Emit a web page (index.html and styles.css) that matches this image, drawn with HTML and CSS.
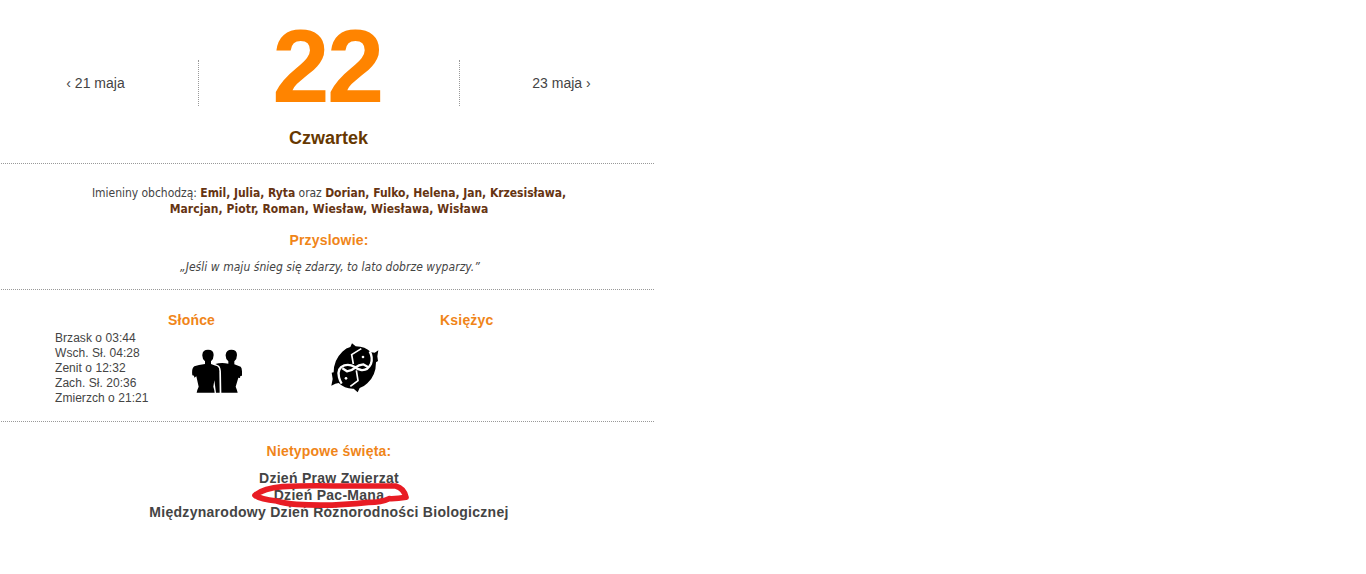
FILE: index.html
```html
<!DOCTYPE html>
<html lang="pl">
<head>
    <meta charset="UTF-8">
    <meta name="viewport" content="width=device-width, initial-scale=1.0">
    <title>Kalendarz - 22 maja</title>
    <link rel="stylesheet" href="styles.css">
</head>
<body>
    <div class="calendar">
        <header class="day">
            <nav class="days">
                <a href="#" class="prev">‹ 21 maja</a>
                <div class="number">22</div>
                <a href="#" class="next">23 maja ›</a>
            </nav>
            <h1 class="weekday">Czwartek</h1>
        </header>

        <section class="names">
            <p class="nameday">
                <span class="line1">Imieniny obchodzą: <b>Emil, Julia, Ryta</b> oraz <b>Dorian, Fulko, Helena, Jan, Krzesisława,</b></span><br>
                <span class="line2"><b>Marcjan, Piotr, Roman, Wiesław, Wiesława, Wisława</b></span>
            </p>
            <h2 class="title">Przyslowie:</h2>
            <p class="proverb">„Jeśli w maju śnieg się zdarzy, to lato dobrze wyparzy.”</p>
        </section>

        <section class="sky">
            <ul class="hours">
                <li>Brzask o 03:44</li>
                <li>Wsch. Sł. 04:28</li>
                <li>Zenit o 12:32</li>
                <li>Zach. Sł. 20:36</li>
                <li>Zmierzch o 21:21</li>
            </ul>
            <div class="sun">
                <h2 class="title">Słońce</h2>
                <!-- bliźnięta -->
                <svg class="gemini" viewBox="36 42 150 132">
                    <path d="M75 87L75 79Q66 72 67 59Q68 44 84 44Q101 44 101 60Q101 72 93 79L93 87Q103 91 112 94Q119 98 118 112L119 173L108 173L103 136L100 155Q103 164 104 173L50 173Q52 163 56 155L49 124L43 128L42 122L37 121Q34 100 43 94Q55 90 75 87Z"/>
                    <path d="M106 87Q123 82 145 86L145 79Q136 72 137 59Q139 44 154 44Q171 44 171 60Q171 72 163 79L163 88L182 95Q187 99 186 122L181 123L180 129L175 128L167 155Q171 164 173 173L124 173L123 115Q123 98 117 92Z"/>
                </svg>
            </div>
            <div class="moon">
                <h2 class="title">Księżyc</h2>
                <!-- ryby -->
                <svg class="pisces" viewBox="33 24 144 150">
                    <path d="M96 25L107 34Q136 34 153 52L164 53L175 46L172 64L174 78L168 82Q168 122 142 145Q131 156 119 159L113 172L101 161Q74 162 56 144L46 146L34 152L38 132L35 113L41 112Q41 75 67 50Q79 38 91 36Z"/>
                    <g class="cut">
                        <path class="thin" d="M124 41L95 59L100 87M91 154L114 137L109 106"/>
                        <path d="M149 49Q159 67 153 86Q143 107 124 105Q111 103 103 95Q89 87 73 91Q50 99 57 127Q60 139 65 146"/>
                        <path d="M145 97L130 88Q116 89 106 98Q96 107 81 109L67 100"/>
                    </g>
                    <g class="eyes">
                        <circle cx="129" cy="66" r="4"/>
                        <circle cx="78" cy="130" r="4"/>
                    </g>
                </svg>
            </div>
        </section>

        <section class="holidays">
            <h2 class="title">Nietypowe święta:</h2>
            <ul>
                <li>Dzień Praw Zwierząt</li>
                <li class="marked">Dzień Pac-Mana
                    <svg class="marker" viewBox="0 0 540 120">
                        <path d="M45 61Q70 40 127 35Q200 31 285 33L467 33Q492 40 498 67Q470 72 447 71Q425 82 385 82Q270 95 170 88Q135 86 110 78Q60 73 45 61Z"/>
                    </svg>
                </li>
                <li>Międzynarodowy Dzień Różnorodności Biologicznej</li>
            </ul>
        </section>
    </div>
</body>
</html>
```
FILE: styles.css
```css
* {
    box-sizing: border-box;
}

body {
    margin: 0;
    background: #fff;
    color: #444;
    font-family: "Liberation Sans", Arial, sans-serif;
}

h1, h2, p, ul {
    margin: 0;
    padding: 0;
}

ul {
    list-style: none;
}

.calendar {
    width: 653px;
    margin-left: 1px;
}

.day,
.names,
.sky {
    border-bottom: 1px dotted #999;
}

/* dzień */
.day {
    height: 164px;
    padding-top: 10px;
    text-align: center;
}

.days {
    display: flex;
    align-items: flex-end;
    height: 96px;
}

.days a {
    height: 46px;
    line-height: 46px;
    color: #444;
    font-size: 14px;
    text-decoration: none;
}

.prev {
    width: 198px;
    padding-right: 8px;
    border-right: 1px dotted #999;
}

.next {
    width: 195px;
    padding-left: 9px;
    border-left: 1px dotted #999;
}

.number {
    width: 260px;
    height: 96px;
    padding-right: 4px;
    line-height: 114px;
    color: #ff8400;
    font-size: 103px;
    font-weight: bold;
    letter-spacing: -2.5px;
}

.weekday {
    margin-top: 21px;
    padding-left: 2px;
    line-height: 22px;
    color: #663800;
    font-size: 18px;
}

.title {
    line-height: 18px;
    color: #f08519;
    font-size: 14px;
    letter-spacing: 0.2px;
}

/* imieniny i przysłowie */
.names {
    height: 126px;
    padding: 21px 0 0 3px;
    font-family: "DejaVu Sans Condensed", Tahoma, sans-serif;
    font-size: 12px;
    line-height: 16px;
    text-align: center;
}

.names b {
    color: #663412;
}

.line1 {
    letter-spacing: -0.03px;
}

.line2 {
    letter-spacing: 0.06px;
}

.names .title {
    margin-top: 14px;
    font-family: "Liberation Sans", Arial, sans-serif;
}

.proverb {
    margin-top: 10px;
    padding-left: 2px;
    font-style: italic;
    letter-spacing: 0.04px;
}

/* słońce i księżyc */
.sky {
    display: flex;
    height: 132px;
    padding: 21px 0 0 54px;
}

.hours {
    width: 113px;
    padding-top: 20px;
    font-size: 12px;
    letter-spacing: 0.05px;
    line-height: 15px;
}

.sun {
    width: 163px;
}

.moon {
    width: 200px;
}

.sky svg {
    display: block;
}

.gemini {
    width: 50px;
    height: 44px;
    margin: 20px 0 0 24px;
}

.moon .title {
    padding-left: 109px;
}

.pisces {
    width: 48px;
    height: 50px;
    margin-top: 14px;
}

.cut {
    fill: none;
    stroke: #fff;
    stroke-width: 7;
}

.thin {
    stroke-width: 5;
}

.eyes {
    fill: #fff;
}

/* nietypowe święta */
.holidays {
    padding: 20px 0 0 3px;
    text-align: center;
}

.holidays ul {
    margin-top: 10px;
    font-size: 14px;
    font-weight: bold;
    letter-spacing: 0.28px;
    line-height: 17px;
}

.marked {
    position: relative;
}

.marker {
    position: absolute;
    top: -12px;
    left: 236px;
    width: 180px;
    height: 40px;
}

.marker path {
    fill: none;
    stroke: #e81c24;
    stroke-width: 17;
    stroke-linejoin: round;
}
```
